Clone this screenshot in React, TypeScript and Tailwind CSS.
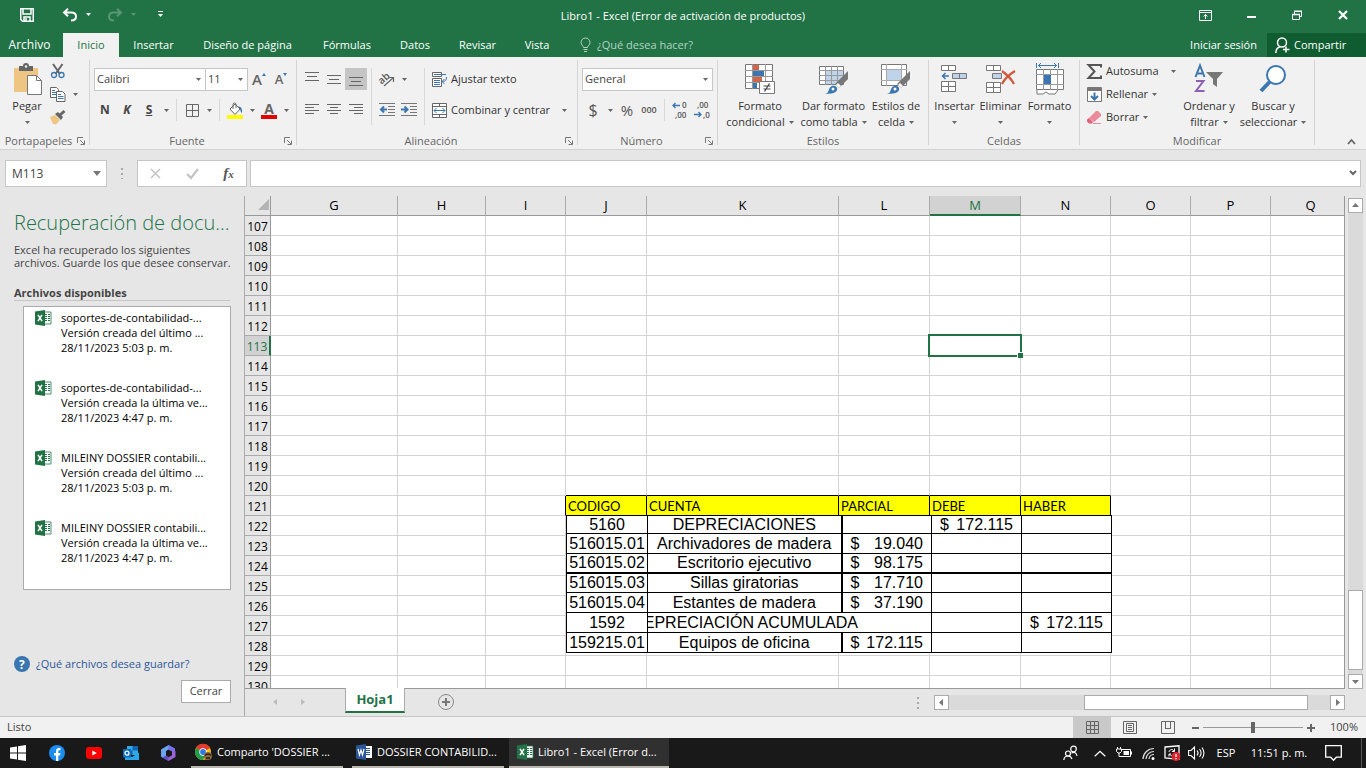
import type { ReactNode } from "react";
import clsx from "clsx";

const columns = [
  { name: "G", width: "w-[127px]" },
  { name: "H", width: "w-[88px]" },
  { name: "I", width: "w-20" },
  { name: "J", width: "w-[81px]" },
  { name: "K", width: "w-48" },
  { name: "L", width: "w-[91px]" },
  { name: "M", width: "w-[91px]" },
  { name: "N", width: "w-[90px]" },
  { name: "O", width: "w-20" },
  { name: "P", width: "w-20" },
  { name: "Q", width: "w-20" },
];

const rows = Array.from({ length: 24 }, (_, i) => 107 + i);

const headings: Record<string, string> = {
  J: "CODIGO",
  K: "CUENTA",
  L: "PARCIAL",
  M: "DEBE",
  N: "HABER",
};

const entries = [
  { code: "5160", account: "DEPRECIACIONES", debit: "172.115" },
  { code: "516015.01", account: "Archivadores de madera", partial: "19.040" },
  { code: "516015.02", account: "Escritorio ejecutivo", partial: "98.175" },
  { code: "516015.03", account: "Sillas giratorias", partial: "17.710", heavy: true },
  { code: "516015.04", account: "Estantes de madera", partial: "37.190" },
  { code: "1592", account: "DEPRECIACIÓN ACUMULADA", credit: "172.115", wide: true },
  { code: "159215.01", account: "Equipos de oficina", partial: "172.115" },
];

const recovered = [
  { name: "soportes-de-contabilidad-...", version: "Versión creada del último ...", date: "28/11/2023 5:03 p. m." },
  { name: "soportes-de-contabilidad-...", version: "Versión creada la última ve...", date: "28/11/2023 4:47 p. m." },
  { name: "MILEINY DOSSIER contabili...", version: "Versión creada del último ...", date: "28/11/2023 5:03 p. m." },
  { name: "MILEINY DOSSIER contabili...", version: "Versión creada la última ve...", date: "28/11/2023 4:47 p. m." },
];

function Svg({ w, h, children, className }: { w: number; h: number; children: ReactNode; className?: string }) {
  return (
    <svg width={w} height={h} viewBox={`0 0 ${w} ${h}`} fill="none" className={clsx("shrink-0 overflow-visible", className)} aria-hidden="true">
      {children}
    </svg>
  );
}

function Caret({ className = "text-[#666]" }: { className?: string }) {
  return (
    <Svg w={5} h={3} className={className}>
      <path d="M0 0h5L2.5 3z" fill="currentColor" />
    </Svg>
  );
}

function CaretButton({ label }: { label: string }) {
  return (
    <button aria-label={label} className="flex h-[22px] w-3 items-center justify-center">
      <Caret />
    </button>
  );
}

function Tool({ label, active, children }: { label: string; active?: boolean; children: ReactNode }) {
  return (
    <button aria-label={label} className={clsx("flex h-[22px] w-[22px] items-center justify-center", active && "bg-[#c5c5c5]")}>
      {children}
    </button>
  );
}

function Divider() {
  return <div className="mx-1 w-px self-stretch bg-[#d8d8d8]" />;
}

function Group({ title, launcher, className, children }: { title: string; launcher?: boolean; className?: string; children: ReactNode }) {
  return (
    <section className="flex pt-[3px]">
      <div className={clsx("flex flex-col", className)}>
        <div className="flex grow">{children}</div>
        <div className="flex h-4 items-center">
          <h2 className="grow text-center text-[11px] leading-4 text-[#666]">{title}</h2>
          {launcher && (
            <button aria-label={`Opciones de ${title}`} className="w-3">
              <Svg w={8} h={8}>
                <path d="M.5 6V.5H6M3 3l4 4M7.5 3.500v4h-4" stroke="#777" />
              </Svg>
            </button>
          )}
        </div>
      </div>
      <div className="mb-1 w-px bg-[#d4d4d4]" />
    </section>
  );
}

function BigButton({ icon, first, second, className }: { icon: ReactNode; first: string; second?: string; className: string }) {
  return (
    <button className={clsx("flex flex-col items-center text-[11px] leading-4 text-[#333]", className)}>
      <span className="flex h-[38px] items-center">{icon}</span>
      <span className="whitespace-nowrap">{first}</span>
      <span className="flex h-4 items-center gap-1 whitespace-nowrap">
        {second}
        <Caret />
      </span>
    </button>
  );
}

function Lines({ rows }: { rows: [number, number, number][] }) {
  return (
    <Svg w={14} h={14}>
      {rows.map(([x, y, w]) => (
        <path key={y} d={`M${x} ${y + 0.5}h${w}`} stroke="#666" />
      ))}
    </Svg>
  );
}

function Indent({ out }: { out?: boolean }) {
  return (
    <Svg w={16} h={14}>
      <path d="M0 .5h16M9 3.500h7M9 6.500h7M9 9.500h7M0 12.500h16" stroke="#777" />
      <path d={out ? "M8 6.500H2M5 3.500l-3 3 3 3" : "M0 6.500h6M3.500 3.500l3 3-3 3"} stroke="#3b76b0" strokeWidth="2" />
    </Svg>
  );
}

function SheetIcon() {
  return (
    <Svg w={16} h={16}>
      <path d="M9 2h7v12H9z" fill="#fff" stroke="#217346" strokeWidth=".8" />
      <path d="M10 4.500h2M13 4.500h2M10 6.500h2M13 6.500h2M10 8.500h2M13 8.500h2M10 10.500h2M13 10.500h2" stroke="#217346" />
      <path d="M0 1.500 10 0v16L0 14.500z" fill="#217346" />
      <path d="m3 4.800 4 6.400M7 4.800l-4 6.400" stroke="#fff" strokeWidth="1.500" />
    </Svg>
  );
}

function WordIcon() {
  return (
    <Svg w={16} h={16}>
      <path d="M9 2h7v12H9z" fill="#fff" />
      <path d="M10 4.500h4M10 6.500h4M10 8.500h4M10 10.500h4" stroke="#2b579a" />
      <path d="M0 1.500 10 0v16L0 14.500z" fill="#2b579a" />
      <path d="m2 5 1.500 6L5 6l1.500 5L8 5" stroke="#fff" strokeWidth="1.200" />
    </Svg>
  );
}

function TitleBar() {
  return (
    <div className="grid h-[33px] grid-cols-3 items-center text-white">
      <div className="flex items-center pb-1 pl-5">
        <button aria-label="Guardar">
          <Svg w={14} h={14}>
            <path d="M.75.75h12.500v12.500H2.500L.75 11.500z" stroke="#fff" strokeWidth="1.500" />
            <path d="M3 1v5h8V1M4 13V9h6v4M6 10v3" stroke="#fff" strokeWidth="1.500" />
          </Svg>
        </button>
        <button aria-label="Deshacer" className="ml-7">
          <Svg w={16} h={14}>
            <path d="M6 .8 2 4.500l4 3.700M2.500 4.500H9c3 0 5 1.500 5 4S12 12.500 9 12.500" stroke="#fff" strokeWidth="2" />
          </Svg>
        </button>
        <button aria-label="Opciones de deshacer" className="ml-2"><Caret className="text-white" /></button>
        <button aria-label="Rehacer" disabled className="ml-4 opacity-25">
          <Svg w={16} h={14}>
            <path d="m10 .8 4 3.700-4 3.700M13.500 4.500H7c-3 0-5 1.500-5 4s2 4 5 4" stroke="#fff" strokeWidth="2" />
          </Svg>
        </button>
        <button aria-label="Opciones de rehacer" disabled className="ml-2 opacity-25"><Caret className="text-white" /></button>
        <button aria-label="Personalizar barra" className="ml-[22px]">
          <Svg w={5} h={7}>
            <path d="M0 .5h5" stroke="#fff" />
            <path d="M0 3h5L2.500 6z" fill="#fff" />
          </Svg>
        </button>
      </div>
      <h1 className="text-center text-[11px] whitespace-nowrap">Libro1 - Excel (Error de activación de productos)</h1>
      <div className="flex items-center justify-end pb-[3px]">
        <button aria-label="Opciones de cinta" className="flex w-[46px] justify-center">
          <Svg w={13} h={11}>
            <path d="M.5.500h12v10H.5zM.5 2.500h12M6.500 9V4.500M4.500 6.500l2-2 2 2" stroke="#fff" />
          </Svg>
        </button>
        <button aria-label="Minimizar" className="flex w-[46px] justify-center">
          <Svg w={9} h={10}><path d="M0 7h9" stroke="#fff" strokeWidth="2" /></Svg>
        </button>
        <button aria-label="Restaurar" className="flex w-[46px] justify-center">
          <Svg w={10} h={10}>
            <path d="M.5 4.500h7v5h-7zM2.500 4V1.500h7v5H8M2 1h8" stroke="#fff" />
            <path d="M0 4.500h8" stroke="#fff" strokeWidth="1.500" />
          </Svg>
        </button>
        <button aria-label="Cerrar ventana" className="flex w-[46px] justify-center">
          <Svg w={10} h={10}><path d="m1 1 8 8M9 1 1 9" stroke="#fff" strokeWidth="2.200" /></Svg>
        </button>
      </div>
    </div>
  );
}

function Tabs() {
  const tab = "h-full whitespace-nowrap";
  return (
    <nav className="flex h-6 items-center text-[11px] text-white">
      <button className={clsx(tab, "w-[63px] pr-1 text-[12px]")}>Archivo</button>
      <button className={clsx(tab, "w-14 bg-[#f1f1f1] text-[#217346]")}>Inicio</button>
      <button className={clsx(tab, "w-[69px]")}>Insertar</button>
      <button className={clsx(tab, "w-[119px]")}>Diseño de página</button>
      <button className={clsx(tab, "w-20")}>Fórmulas</button>
      <button className={clsx(tab, "w-14")}>Datos</button>
      <button className={clsx(tab, "w-[69px]")}>Revisar</button>
      <button className={clsx(tab, "w-[50px]")}>Vista</button>
      <label className="ml-[18px] flex items-center gap-[6px] text-[#b5d2c1]">
        <Svg w={11} h={14}>
          <path d="M3.500 9.500C3.500 8 1 7 1 4.500a4.400 4.400 0 0 1 9 0c0 2.500-2.500 3.500-2.500 5zM3.500 11.500h4M4 13.500h3" stroke="currentColor" />
        </Svg>
        <input className="w-28 outline-none placeholder:text-[#b5d2c1]" placeholder="¿Qué desea hacer?" />
      </label>
      <div className="grow" />
      <button className={clsx(tab, "px-[10px]")}>Iniciar sesión</button>
      <button className={clsx(tab, "flex w-[99px] items-center gap-1 bg-[#0e5c2f] pl-2")}>
        <Svg w={15} h={16}>
          <circle cx="7" cy="5.500" r="4.500" stroke="#fff" strokeWidth="1.500" />
          <path d="M.8 16c0-3.500 1.500-5.500 4.200-6.300M11 9.500v6M8 12.500h6.500" stroke="#fff" strokeWidth="1.500" />
        </Svg>
        Compartir
      </button>
    </nav>
  );
}

function Clipboard() {
  return (
    <Group title="Portapapeles" launcher className="w-[89px]">
      <BigButton
        className="ml-[7px] w-10"
        first="Pegar"
        icon={
          <Svg w={29} h={32}>
            <path d="M1 5h24v24H1z" fill="#efc584" />
            <path d="M6 3h4a3 3 0 0 1 6 0h4v5H6z" fill="#666" />
            <circle cx="13" cy="3.500" r="1.200" fill="#f1f1f1" />
            <path d="M14.500 12.500h9l5 5v14h-14z" fill="#fff" stroke="#777" />
            <path d="M23.500 12.500v5h5" stroke="#777" />
          </Svg>
        }
      />
      <div className="flex flex-col gap-px">
        <Tool label="Cortar">
          <Svg w={16} h={16} >
            <path d="m3 1 7 10M12.500 1l-7 10" stroke="#666" strokeWidth="2" />
            <circle cx="4" cy="12" r="2.500" stroke="#3b76b0" strokeWidth="1.300" />
            <circle cx="11.500" cy="12" r="2.500" stroke="#3b76b0" strokeWidth="1.300" />
          </Svg>
        </Tool>
        <div className="flex">
          <Tool label="Copiar">
            <Svg w={16} h={15}>
              <path d="M.5.500h6l2 2v8h-8z" fill="#fff" stroke="#666" />
              <path d="M2 3.500h3M2 5.500h4M2 7.500h4" stroke="#3b76b0" />
              <path d="M6.500 4.500h6l2.500 2.500v7.500H6.500z" fill="#fff" stroke="#666" />
              <path d="M8 7.500h3M8 9.500h5.500M8 11.500h5.500" stroke="#3b76b0" />
            </Svg>
          </Tool>
          <CaretButton label="Opciones de copiar" />
        </div>
        <Tool label="Copiar formato">
          <Svg w={16} h={15}>
            <path d="m0 7 5-2 5 5-4 4.500-3-.5z" fill="#efc584" />
            <path d="m5 4 3-2 5 5-2 3z" fill="#666" />
            <path d="m10 5 4.500-4" stroke="#666" strokeWidth="3" />
          </Svg>
        </Tool>
      </div>
    </Group>
  );
}

function FontGroup() {
  return (
    <Group title="Fuente" launcher className="w-[206px]">
      <div className="flex flex-col gap-2 pt-2 pl-1">
        <div className="flex items-center">
          <Select label="Fuente" value="Calibri" className="w-[112px]" />
          <Select label="Tamaño" value="11" className="-ml-px w-[43px]" />
          <Tool label="Aumentar tamaño">
            <span className="text-[15px] font-semibold text-[#666]">A</span>
            <Svg w={4} h={14}><path d="M0 3h4L2 0z" fill="#3b76b0" /></Svg>
          </Tool>
          <Tool label="Disminuir tamaño">
            <span className="text-[13px] font-semibold text-[#666]">A</span>
            <Svg w={4} h={14}><path d="M0 0h4L2 3z" fill="#3b76b0" /></Svg>
          </Tool>
        </div>
        <div className="flex items-center text-[12px] font-bold text-[#444]">
          <Tool label="Negrita">N</Tool>
          <Tool label="Cursiva"><i>K</i></Tool>
          <Tool label="Subrayado"><u>S</u></Tool>
          <CaretButton label="Opciones de subrayado" />
          <Divider />
          <Tool label="Bordes">
            <Svg w={13} h={13}><path d="M.5.500h12v12H.5zM6.500 0v13M0 6.500h13" stroke="#666" /></Svg>
          </Tool>
          <CaretButton label="Opciones de bordes" />
          <Divider />
          <Tool label="Color de relleno">
            <Svg w={16} h={17}>
              <path d="m3 7 5-5 5 5-5 5.500z" fill="#fff" stroke="#666" />
              <path d="M6 7V2.500a1.500 1.500 0 0 1 3 0V6" stroke="#666" />
              <path d="M11 4.500c3 0 4.500 2 4 6.500-1.500-.5-1.500-3-2-4z" fill="#3b76b0" />
              <path d="M0 13h16v4H0z" fill="#ff0" />
            </Svg>
          </Tool>
          <CaretButton label="Opciones de relleno" />
          <Tool label="Color de fuente">
            <span className="flex flex-col items-center">
              <span className="text-[14px] leading-[13px] text-[#666]">A</span>
              <span className="h-1 w-4 bg-[#e60000]" />
            </span>
          </Tool>
          <CaretButton label="Opciones de color" />
        </div>
      </div>
    </Group>
  );
}

function Select({ label, value, className }: { label: string; value: string; className: string }) {
  return (
    <div className={clsx("relative flex items-center", className)}>
      <select aria-label={label} className="h-[23px] w-full appearance-none border border-[#c6c6c6] bg-white pl-[2px] text-[11px] text-[#444]">
        <option>{value}</option>
      </select>
      <Caret className="pointer-events-none absolute right-[5px] text-[#666]" />
    </div>
  );
}

function Alignment() {
  return (
    <Group title="Alineación" launcher className="w-[280px]">
      <div className="flex pt-2 pb-2 pl-1 text-[11px] text-[#333]">
        <div className="grid grid-cols-3 content-start gap-y-[9px]">
          <Tool label="Arriba"><Lines rows={[[0, 0, 14], [2, 4, 10], [0, 8, 14]]} /></Tool>
          <Tool label="Medio"><Lines rows={[[0, 3, 14], [2, 7, 10], [0, 11, 14]]} /></Tool>
          <Tool label="Abajo" active><Lines rows={[[0, 5, 14], [2, 9, 10], [0, 13, 14]]} /></Tool>
          <Tool label="Izquierda"><Lines rows={[[0, 1, 14], [0, 4, 9], [0, 7, 14], [0, 10, 9]]} /></Tool>
          <Tool label="Centro"><Lines rows={[[0, 1, 14], [3, 4, 8], [0, 7, 14], [3, 10, 8]]} /></Tool>
          <Tool label="Derecha"><Lines rows={[[0, 1, 14], [5, 4, 9], [0, 7, 14], [5, 10, 9]]} /></Tool>
        </div>
        <Divider />
        <div className="flex w-11 flex-col gap-[9px]">
          <div className="flex">
            <Tool label="Orientación">
              <Svg w={18} h={16}>
                <text x="1" y="11" fontSize="10" fontWeight="600" fill="#555" transform="rotate(-42 6 9)">ab</text>
                <path d="m6 15 9-8M11 6.500h4.500V11" stroke="#666" strokeWidth="1.200" />
              </Svg>
            </Tool>
            <CaretButton label="Opciones de orientación" />
          </div>
          <div className="flex">
            <Tool label="Disminuir sangría"><Indent out /></Tool>
            <Tool label="Aumentar sangría"><Indent /></Tool>
          </div>
        </div>
        <Divider />
        <div className="flex flex-col gap-[9px]">
          <button className="flex h-[22px] items-center gap-1 pl-[3px]">
            <Svg w={15} h={15}>
              <path d="M.5.500h9v4h-9zM.5 6.500h9v8h-9z" fill="#fff" stroke="#666" />
              <path d="M2 2.500h12M2 8.500h6M2 10.500h6M2 12.500h6M14.500 5c0 3-1 4.500-4.500 4.500M12.500 7 10 9.500l2.500 2.500" stroke="#3b76b0" />
            </Svg>
            Ajustar texto
          </button>
          <button className="flex h-[22px] items-center gap-1 pl-[3px] whitespace-nowrap">
            <Svg w={15} h={15}>
              <path d="M.5.500h14v14H.5zM0 3.500h15M0 11.500h15M7.500 0v3M7.500 12v3" fill="#fff" stroke="#666" />
              <path d="M2 7.500h11M4.500 5 2 7.500 4.500 10M10.500 5 13 7.500 10.500 10" stroke="#3b76b0" />
            </Svg>
            Combinar y centrar
            <span className="pl-2"><Caret /></span>
          </button>
        </div>
      </div>
    </Group>
  );
}

function NumberGroup() {
  return (
    <Group title="Número" launcher className="w-[139px]">
      <div className="flex flex-col gap-2 pt-2 pl-1">
        <Select label="Formato de número" value="General" className="w-[131px]" />
        <div className="flex items-center text-[#555]">
          <Tool label="Contabilidad"><span className="text-[16px]">$</span></Tool>
          <CaretButton label="Opciones de moneda" />
          <Tool label="Porcentaje"><span className="text-[15px]">%</span></Tool>
          <Tool label="Millares"><span className="text-[9px] font-semibold">000</span></Tool>
          <Divider />
          <Tool label="Aumentar decimales">
            <Svg w={16} h={18}>
              <text x="10" y="7" fontSize="8" fontWeight="600" fill="#555">0</text>
              <text x="3" y="17" fontSize="8" fontWeight="600" fill="#555">,00</text>
              <path d="M8 4.500H1M3.500 2 1 4.500 3.500 7" stroke="#3b76b0" strokeWidth="1.300" />
            </Svg>
          </Tool>
          <Tool label="Disminuir decimales">
            <Svg w={16} h={18}>
              <text x="3" y="7" fontSize="8" fontWeight="600" fill="#555">,00</text>
              <text x="9" y="17" fontSize="8" fontWeight="600" fill="#555">,0</text>
              <path d="M0 13.500h7M4.500 11 7 13.500 4.500 16" stroke="#3b76b0" strokeWidth="1.300" />
            </Svg>
          </Tool>
        </div>
      </div>
    </Group>
  );
}

function Brush() {
  return (
    <>
      <path d="M29 7v8l-9 9-4-4z" fill="#777" />
      <path d="m19 19 3 3-2 2-3-3z" fill="#fff" />
      <path d="M6 30c4-1 3-4 5-6.500 2-2.500 6-2 7 .5 1 3-2 6-12 6z" fill="#3b76b0" />
      <circle cx="14" cy="25" r="1.500" fill="#fff" />
    </>
  );
}

function Styles() {
  return (
    <Group title="Estilos" className="w-[210px]">
      <div className="flex pl-[5px]">
        <BigButton
          className="w-[74px]"
          first="Formato"
          second="condicional"
          icon={
            <Svg w={30} h={30}>
              <path d="M.5.500h27v24H.5z" fill="#fff" stroke="#777" />
              <path d="M7 1h7v5H7zM7 13h10v5H7z" fill="#d2664b" />
              <path d="M7 7h12v5H7zM7 19h5v5H7z" fill="#3b76b0" />
              <path d="M0 6.500h28M0 12.500h28M0 18.500h28M7.500 0v25M20.500 0v25" stroke="#999" />
              <path d="M14.500 17.500h15v12h-15z" fill="#fff" stroke="#777" />
              <path d="M18.500 22h7M18.500 25h7M24.500 19.500l-5 8" stroke="#444" strokeWidth="1.200" />
            </Svg>
          }
        />
        <BigButton
          className="w-[73px]"
          first="Dar formato"
          second="como tabla"
          icon={
            <Svg w={30} h={30}>
              <path d="M.5 2.500h24v18H.5z" fill="#fff" stroke="#777" />
              <path d="M7 7h17v13H7z" fill="#bfd3ea" />
              <path d="M0 6.500h25M0 11.500h25M0 16.500h25M6.500 2v19M12.500 2v19M18.500 2v19" stroke="#999" />
              <Brush />
            </Svg>
          }
        />
        <BigButton
          className="w-[52px]"
          first="Estilos de"
          second="celda"
          icon={
            <Svg w={30} h={30}>
              <path d="M.5.500h25v21H.5z" fill="#fff" stroke="#777" />
              <path d="M6 6h14v10H6z" fill="#bfd3ea" />
              <path d="M0 5.500h26M0 16.500h26M5.500 0v22M20.500 0v22" stroke="#aaa" />
              <Brush />
            </Svg>
          }
        />
      </div>
    </Group>
  );
}

function Cells() {
  return (
    <Group title="Celdas" className="w-[150px]">
      <div className="flex pl-[3px]">
        <BigButton
          className="w-[45px]"
          first="Insertar"
          icon={
            <Svg w={27} h={29}>
              <path d="M.5.500h14v5H.5zM7.500 0v6M.5 16.500h14v10H.5zM7.500 16v11M0 21.500h15" fill="#fff" stroke="#777" />
              <path d="M11.500 8.500h14v5h-14zM18.500 8v6" fill="#bfd3ea" stroke="#777" />
              <path d="M8 11H1.500M4.500 8l-3 3 3 3" stroke="#3b76b0" strokeWidth="1.500" />
            </Svg>
          }
        />
        <BigButton
          className="w-[47px]"
          first="Eliminar"
          icon={
            <Svg w={30} h={29}>
              <path d="M.5.500h14v5H.5zM7.500 0v6M.5 17.500h14v10H.5zM7.500 17v11M0 22.500h15" fill="#fff" stroke="#777" />
              <path d="M6.500 8.500h9v5h-9z" fill="#bfd3ea" stroke="#777" />
              <path d="M16 6c4 3 9 7 12 13M29 6c-5 3-10 7-13 13" stroke="#d2573b" strokeWidth="2.200" />
            </Svg>
          }
        />
        <BigButton
          className="w-[51px]"
          first="Formato"
          icon={
            <Svg w={28} h={32}>
              <path d="M.5 0v5M22.500 0v5M2 2.500h19M5 0 2.500 2.500 5 5M18 0l2.500 2.500L18 5" stroke="#3b76b0" />
              <path d="M.5 6.500h27v20H.5zM1 27v4h6l3-2 3 2h6l3-4" fill="#fff" stroke="#777" />
              <path d="M0 11.500h28M0 21.500h28M7.500 6v21M14.500 6v21M21.500 6v21" stroke="#999" />
              <path d="M8 12h7v9H8z" fill="#3b76b0" />
            </Svg>
          }
        />
      </div>
    </Group>
  );
}

function Editing() {
  const action = "flex h-[23px] items-center gap-1 text-[11px] text-[#333]";
  return (
    <Group title="Modificar" className="w-[234px]">
      <div className="flex w-24 flex-col pl-[7px]">
        <button className={action}>
          <Svg w={15} h={15}>
            <path d="M14 3.500V1H1.500l6 6.500-6 6.500H14v-2.500" stroke="#555" strokeWidth="2" />
          </Svg>
          <span className="grow text-left">Autosuma</span>
          <Caret />
        </button>
        <button className={action}>
          <Svg w={15} h={15}>
            <path d="M.5.500h14v14H.5z" fill="#fff" stroke="#777" />
            <path d="M1 1h13v3H1z" fill="#777" />
            <path d="M7.500 5.500v7M4 9l3.500 3.500L11 9" stroke="#3b76b0" strokeWidth="2" />
          </Svg>
          Rellenar <Caret />
        </button>
        <button className={action}>
          <Svg w={15} h={15}>
            <path d="m2 8 7-7h2l3 3v2l-7 6z" fill="#ea8a9b" />
            <path d="m0 9.500 2-1.500 4 4-1 1.500H2l-2-2z" fill="#e2607a" />
            <path d="M6 13.500h8" stroke="#ea8a9b" />
          </Svg>
          Borrar <Caret />
        </button>
      </div>
      <BigButton
        className="w-[66px]"
        first="Ordenar y"
        second="filtrar"
        icon={
          <Svg w={30} h={30}>
            <path d="M1.500 13 6 1.500 10.500 13M3 9.500h6" stroke="#3b76b0" strokeWidth="2" />
            <path d="M2 17h7.500L2 27h8.500" stroke="#8b5fb5" strokeWidth="2" />
            <path d="M12 8h17l-6 7v8l-4-3v-5z" fill="#777" />
          </Svg>
        }
      />
      <BigButton
        className="w-[62px]"
        first="Buscar y"
        second="seleccionar"
        icon={
          <Svg w={28} h={29}>
            <circle cx="17" cy="10" r="9" fill="#fff" stroke="#3b76b0" strokeWidth="2" />
            <path d="M10.500 17 2 26" stroke="#3b76b0" strokeWidth="4" />
          </Svg>
        }
      />
    </Group>
  );
}

function FormulaBar() {
  return (
    <div className="flex h-[46px] bg-[#e6e6e6] px-[5px] pt-[10px] pb-[9px]">
      <div className="relative flex w-[102px] items-center">
        <input aria-label="Cuadro de nombres" defaultValue="M113" className="h-full w-full border border-[#c6c6c6] bg-white pl-[6px] text-[12px] text-[#444]" />
        <Svg w={8} h={5} className="pointer-events-none absolute right-[6px]"><path d="M0 0h8L4 5z" fill="#777" /></Svg>
      </div>
      <div className="flex w-[30px] items-center justify-center">
        <Svg w={2} h={12}><path d="M1 1v11" stroke="#aaa" strokeWidth="2" strokeDasharray="2 3" /></Svg>
      </div>
      <div className="flex w-[110px] items-center justify-around border border-[#c6c6c6] bg-white">
        <button aria-label="Cancelar"><Svg w={11} h={11}><path d="m1 1 9 9M10 1l-9 9" stroke="#c4c4c4" strokeWidth="1.500" /></Svg></button>
        <button aria-label="Introducir"><Svg w={13} h={11}><path d="m1 6 4 4 7-9" stroke="#c4c4c4" strokeWidth="2.200" /></Svg></button>
        <button className="font-['Liberation_Serif',serif] text-[15px] leading-none font-bold text-[#555] italic">
          f<span className="text-[11px]">x</span>
        </button>
      </div>
      <div className="relative ml-[3px] flex grow items-center">
        <input aria-label="Barra de fórmulas" className="h-full w-full border border-[#c6c6c6] bg-white px-1 text-[12px]" />
        <button aria-label="Expandir" className="absolute right-1">
          <Svg w={8} h={6}><path d="m1 1 3 3 3-3" stroke="#666" strokeWidth="2" /></Svg>
        </button>
      </div>
    </div>
  );
}

function RecoveryPane() {
  return (
    <aside className="flex w-[244px] shrink-0 flex-col px-[14px] pt-3 text-[11px] text-[#444]">
      <h2 className="text-[20px] leading-[30px] font-light whitespace-nowrap text-[#217346]">Recuperación de docu...</h2>
      <p className="mt-[5px] leading-[13px] whitespace-nowrap">
        Excel ha recuperado los siguientes
        <br />
        archivos. Guarde los que desee conservar.
      </p>
      <h3 className="mt-4 mb-[5px] border-b border-[#c6c6c6] leading-[15px] font-bold">Archivos disponibles</h3>
      <ul className="ml-[9px] h-[284px] w-52 border border-[#ababab] bg-white pt-[3px] text-black">
        {recovered.map((file, i) => (
          <li key={i} className="flex h-[70px] gap-[10px] pl-[11px] leading-[15px] whitespace-nowrap">
            <SheetIcon />
            <div>
              <div>{file.name}</div>
              <div>{file.version}</div>
              <div>{file.date}</div>
            </div>
          </li>
        ))}
      </ul>
      <div className="grow" />
      <a href="#ayuda" className="flex items-center gap-[6px] text-[#2b579a]">
        <Svg w={16} h={16}>
          <circle cx="8" cy="8" r="8" fill="#3b76b0" />
          <text x="5" y="12.500" fontSize="12" fontWeight="700" fill="#fff">?</text>
        </Svg>
        ¿Qué archivos desea guardar?
      </a>
      <button className="mt-2 mr-[-1px] mb-[13px] h-[23px] w-[50px] self-end border border-[#ababab] bg-white">Cerrar</button>
    </aside>
  );
}

function Money({ value }: { value?: string }) {
  if (!value) return null;
  return (
    <div className="flex justify-between pr-2 pl-2">
      <span>$</span>
      <span>{value}</span>
    </div>
  );
}

// Sits on top of the cells and does not follow their grid exactly
function PastedTable() {
  return (
    <table className="absolute -top-px left-0 z-10 w-[546px] table-fixed border-collapse bg-white font-['Liberation_Sans',Arial,sans-serif] text-[16px] leading-[17px] text-black">
      <colgroup>
        <col className="w-[81px]" />
        <col className="w-[194px]" />
        <col className="w-[90px]" />
        <col className="w-[90px]" />
        <col className="w-[90px]" />
      </colgroup>
      <tbody>
        {entries.map((entry, i) => {
          const cell = clsx("border border-black p-0", entry.heavy && "border-t-2");
          return (
            <tr key={entry.code} className={i === 0 ? "h-[18px]" : i === 3 ? "h-[19px]" : "h-5"}>
              <td className={clsx(cell, "text-center")}>{entry.code}</td>
              <td className={clsx(cell, "text-center whitespace-nowrap")} colSpan={entry.wide ? 2 : 1}>
                {entry.wide ? (
                  <div className="flex w-[210px] justify-end overflow-x-clip">{entry.account}</div>
                ) : (
                  entry.account
                )}
              </td>
              {!entry.wide && (
                <td className={clsx(cell, "border-l-2")}>
                  <Money value={entry.partial} />
                </td>
              )}
              <td className={cell}><Money value={entry.debit} /></td>
              <td className={cell}><Money value={entry.credit} /></td>
            </tr>
          );
        })}
      </tbody>
    </table>
  );
}

function Grid() {
  return (
    <div className="min-w-0 grow overflow-hidden border-r border-b border-[#999]">
      <table className="w-[1105px] table-fixed border-separate border-spacing-0 bg-white text-black">
        <thead>
          <tr className="h-5 bg-[#e6e6e6] text-[13px]">
            <th className="w-[26px] border-r border-b border-[#999] p-0">
              <Svg w={12} h={12} className="ml-auto"><path d="M11 0v11H0z" fill="#b4b4b4" /></Svg>
            </th>
            {columns.map(({ name, width }) => (
              <th
                key={name}
                className={clsx(
                  width,
                  "border-r p-0 leading-[18px] font-normal",
                  name === "M"
                    ? "border-b-2 border-r-[#ababab] border-b-[#217346] bg-[#d2d2d2] text-[#217346]"
                    : "border-b border-r-[#ababab] border-b-[#999]",
                )}
              >
                {name}
              </th>
            ))}
          </tr>
        </thead>
        <tbody>
          {rows.map((row) => (
            <tr key={row} className="h-5">
              <th
                className={clsx(
                  "border-b border-b-[#ababab] p-0 pt-[2px] text-[12px] leading-[17px] font-normal",
                  row === 113
                    ? "border-r-2 border-r-[#217346] bg-[#d2d2d2] text-[#217346]"
                    : "border-r border-r-[#999] bg-[#e6e6e6]",
                )}
              >
                {row}
              </th>
              {columns.map(({ name }) => {
                const heading = row === 121 ? headings[name] : undefined;
                // the header band is outlined, so its neighbours lend it their edges
                const edge = row === 121 && name === "I" ? "border-r-black" : "border-r-[#d4d4d4]";
                const top = row === 120 && headings[name] ? "border-b-black" : "border-b-[#d4d4d4]";
                const selected = row === 113 && name === "M";
                const anchor = row === 122 && name === "J";
                return (
                  <td
                    key={name}
                    className={clsx(
                      "border-r border-b p-0",
                      (selected || anchor) && "relative",
                      heading
                        ? "border-black bg-[#ff0] pt-[2px] pl-[2px] font-['Lato',sans-serif] text-[13px] leading-[17px]"
                        : [edge, top],
                    )}
                  >
                    {heading}
                    {selected && (
                      <div className="absolute -inset-[2px] z-10 border-2 border-[#217346]">
                        <div className="absolute -right-[3px] -bottom-[3px] h-[6px] w-[6px] border-t border-l border-white bg-[#217346]" />
                      </div>
                    )}
                    {anchor && <PastedTable />}
                  </td>
                );
              })}
            </tr>
          ))}
        </tbody>
      </table>
    </div>
  );
}

function ScrollButton({ label, d }: { label: string; d: string }) {
  return (
    <button aria-label={label} className="flex h-[15px] w-[15px] shrink-0 items-center justify-center border border-[#ababab] bg-white">
      <Svg w={7} h={7}><path d={d} fill="#777" /></Svg>
    </button>
  );
}

function SheetTabs() {
  return (
    <div className="flex h-[27px] shrink-0 items-start pr-[21px]">
      <div className="flex h-full w-[100px] items-center justify-center gap-6 pr-3 pb-px">
        <button aria-label="Hoja anterior"><Svg w={4} h={6}><path d="M4 0v6L0 3z" fill="#bbb" /></Svg></button>
        <button aria-label="Hoja siguiente"><Svg w={4} h={6}><path d="M0 0v6l4-3z" fill="#bbb" /></Svg></button>
      </div>
      <button className="-mt-px h-[25px] w-[60px] border-x border-b-2 border-x-[#ababab] border-b-[#217346] bg-white text-[13px] font-bold text-[#217346]">Hoja1</button>
      <button aria-label="Hoja nueva" className="mt-[5px] ml-[33px]">
        <Svg w={16} h={16}>
          <circle cx="8" cy="8" r="7.500" stroke="#888" />
          <path d="M8 4v8M4 8h8" stroke="#777" strokeWidth="2" />
        </Svg>
      </button>
      <div className="grow" />
      <Svg w={2} h={12} className="mt-2 mr-[15px]"><path d="M1 0v12" stroke="#aaa" strokeWidth="2" strokeDasharray="2 3" /></Svg>
      <div className="mt-[6px] flex w-[411px] bg-[#dadada]">
        <ScrollButton label="Desplazar a la izquierda" d="M5 0v7L1 3.500z" />
        <div className="grow" />
        <div className="w-56 border border-[#ababab] bg-white" />
        <div className="w-[22px]" />
        <ScrollButton label="Desplazar a la derecha" d="M2 0v7l4-3.500z" />
      </div>
    </div>
  );
}

function StatusBar() {
  return (
    <div className="flex h-[22px] shrink-0 items-center border-t border-[#c6c6c6] bg-[#f1f1f1] pr-2 pl-[7px] text-[11px] text-[#444]">
      <span className="grow">Listo</span>
      <button aria-label="Normal" className="flex h-full w-[38px] items-center justify-center bg-[#c9c9c9]">
        <Svg w={13} h={13}><path d="M.5.500h12v12H.5zM4.500 0v13M8.500 0v13M0 4.500h13M0 8.500h13" stroke="#666" /></Svg>
      </button>
      <button aria-label="Diseño de página" className="flex h-full w-[38px] items-center justify-center">
        <Svg w={14} h={13}><path d="M.5.500h13v12H.5zM3.500 2.500h7v8h-7zM5 4.500h4M5 6.500h4M5 8.500h4" stroke="#666" /></Svg>
      </button>
      <button aria-label="Vista previa de salto de página" className="flex h-full w-[38px] items-center justify-center">
        <Svg w={14} h={13}><path d="M.5.500h13v12H.5zM4.500 0v7.500h5V0M9.500 7.500H4" stroke="#666" /></Svg>
      </button>
      <button aria-label="Alejar" className="ml-[5px]"><Svg w={7} h={8}><path d="M0 4h7" stroke="#666" strokeWidth="2" /></Svg></button>
      <input
        type="range"
        aria-label="Zoom"
        defaultValue={50}
        className="mx-1 h-3 w-[100px] appearance-none bg-[linear-gradient(#999,#999)] bg-[length:100%_1px] bg-center bg-no-repeat [&::-webkit-slider-thumb]:h-[11px] [&::-webkit-slider-thumb]:w-1 [&::-webkit-slider-thumb]:appearance-none [&::-webkit-slider-thumb]:bg-[#666]"
      />
      <button aria-label="Acercar"><Svg w={8} h={8}><path d="M0 4h8M4 0v8" stroke="#666" strokeWidth="2" /></Svg></button>
      <span className="w-[43px] text-right">100%</span>
    </div>
  );
}

function Taskbar() {
  const app = "flex h-full items-center gap-[5px] pl-1 border-b-2 border-[#b8b8b0] whitespace-nowrap overflow-hidden";
  return (
    <div className="flex h-[30px] shrink-0 items-center bg-[#191919] text-[11px] text-white">
      <button aria-label="Inicio" className="flex w-9 justify-center">
        <Svg w={16} h={16}><path d="M0 2.500 7 1.500V7.500H0zM8 1.300 16 0v7.500H8zM0 8.500h7v6L0 13.500zM8 8.500h8V16l-8-1.300z" fill="#fff" /></Svg>
      </button>
      <button aria-label="Facebook" className="flex w-10 justify-center pl-[2px]">
        <Svg w={16} h={16}>
          <circle cx="8" cy="8" r="8" fill="#1b8df0" />
          <path d="M7 16v-5.500H5V8h2V6.300C7 4 8.300 3 10 3h1.500v2.200h-1C9.500 5.200 9.300 5.700 9.300 6.500V8h2.200l-.4 2.500H9.300V16z" fill="#fff" />
        </Svg>
      </button>
      <button aria-label="YouTube" className="flex w-9 justify-center">
        <Svg w={16} h={12}>
          <rect width="16" height="12" rx="3" fill="#f00" />
          <path d="m6.300 3.500 4.500 2.500-4.500 2.500z" fill="#fff" />
        </Svg>
      </button>
      <button aria-label="Outlook" className="flex w-[38px] justify-center">
        <Svg w={16} h={16}>
          <path d="M4 1h11v9H4z" fill="#1066b5" />
          <path d="M4 1h5.500v4.500H4zM9.500 5.500H15V10H9.500z" fill="#32a9e7" />
          <path d="M2 7.500 9 12l7-4.500V15H2z" fill="#28a8ea" />
          <path d="M0 4h8v8.500H0z" fill="#0f6cbd" />
          <circle cx="4" cy="8.200" r="2" stroke="#fff" strokeWidth="1.200" />
        </Svg>
      </button>
      <button aria-label="Microsoft 365" className="flex w-9 justify-center">
        <Svg w={15} h={16}>
          <path d="m7.500 0 6.500 3.800v4L7.500 4.500 5 6v5l-3.500 1.700L0 11.500v-7z" fill="#6aa5ee" />
          <path d="m7.500 0 6.500 3.800v4L7.500 4.500z" fill="#7a6ff0" />
          <path d="M14.500 6v6L7.500 16l-6-3.500L5 10.800l2.500 1.400 3.500-2V6z" fill="#9a62d8" />
          <path d="m1.500 12.500 3.500-1.700 2.500 1.400V16z" fill="#5a50c8" />
        </Svg>
      </button>
      <button className={clsx(app, "ml-[5px] w-[152px]")}>
        <Svg w={17} h={16}>
          <circle cx="8" cy="8" r="8" fill="#fbc116" />
          <path d="M8 8 1 4a8 8 0 0 1 14 0z" fill="#e33b2e" />
          <path d="M8 8 1.100 4A8 8 0 0 0 8 16l3.500-6z" fill="#229c4b" />
          <circle cx="8" cy="8" r="3.700" fill="#fff" />
          <circle cx="8" cy="8" r="2.900" fill="#2f78e4" />
          <circle cx="13" cy="12" r="4" fill="#8b6b43" />
          <path d="M10 11.500c2-2 4-2 6 0M11 14h4" stroke="#2b1d12" strokeWidth="1.300" />
        </Svg>
        Comparto 'DOSSIER ...
      </button>
      <button className={clsx(app, "ml-[9px] w-[152px]")}>
        <WordIcon />
        DOSSIER CONTABILID...
      </button>
      <button className={clsx(app, "ml-[5px] w-40 bg-[#303030] pl-2")}>
        <SheetIcon />
        Libro1 - Excel (Error d...
      </button>
      <div className="grow" />
      <button aria-label="Contactos" className="flex w-9 justify-center">
        <Svg w={15} h={16}>
          <circle cx="10.500" cy="4" r="2.800" stroke="#fff" strokeWidth="1.200" />
          <circle cx="5" cy="8.500" r="2.500" stroke="#fff" strokeWidth="1.200" />
          <path d="M.8 15c.3-2.500 2-4 4.200-4s3.500 1.500 4 3M8.500 8c3-1.500 5 0 5.500 3" stroke="#fff" strokeWidth="1.200" />
        </Svg>
      </button>
      <button aria-label="Iconos ocultos" className="flex w-6 justify-center">
        <Svg w={12} h={7}><path d="m.7 6.300 5.300-5 5.300 5" stroke="#fff" strokeWidth="1.300" /></Svg>
      </button>
      <button aria-label="Batería" className="flex w-6 justify-center">
        <Svg w={16} h={12}>
          <path d="M6 2.500h8.500v7H4M15.500 4.500v3M1.500 0v2M4.500 0v2M3 6v3.500h2" stroke="#fff" />
          <path d="M.5 2h5v2.500L4 6H2L.5 4.500z" stroke="#fff" />
          <path d="M7.500 4H13v4H7.500z" fill="#fff" />
        </Svg>
      </button>
      <button aria-label="Wi-Fi" className="flex w-[25px] justify-center">
        <Svg w={13} h={13}>
          <path d="M1 12A11 11 0 0 1 12 1.500M4 12a8 8 0 0 1 8-7.500M7 12a5 5 0 0 1 5-4.500" stroke="#ddd" strokeWidth="1.200" />
          <circle cx="11" cy="11.500" r="1.500" fill="#fff" />
        </Svg>
      </button>
      <button aria-label="Actualización" className="flex w-[23px] justify-center">
        <Svg w={17} h={16}>
          <path d="m1 2 14-1.200v13.500L1 13z" stroke="#fff" strokeWidth="1.300" />
          <path d="M5 7c.5-3 4-3 5-1M10.500 3.500V6.500H8M10 8.500c-.5 2.500-3.500 2.500-5 .5M5 11.500V9h2" stroke="#fff" />
          <circle cx="12" cy="11.500" r="4.500" fill="#e0242f" />
          <path d="M12 9v3M12 13v1.300" stroke="#fff" strokeWidth="1.300" />
        </Svg>
      </button>
      <button aria-label="Volumen" className="flex w-[25px] justify-center">
        <Svg w={17} h={14}>
          <path d="M.6 4.500H3L6.500 1v12L3 9.500H.6zM9 4.500c1.300 1.500 1.300 3.500 0 5M11.500 3c2 2.500 2 5.500 0 8M14 1.500c2.500 3.500 2.500 7.500 0 11" stroke="#fff" strokeWidth="1.100" />
        </Svg>
      </button>
      <span className="w-[34px] text-center">ESP</span>
      <span className="w-[72px] text-center whitespace-nowrap">11:51 p. m.</span>
      <button aria-label="Notificaciones" className="mr-[10px] flex w-9 justify-center">
        <Svg w={17} h={16}><path d="M.7.700h15.600v11.500h-5l-2.800 3-2.800-3h-5z" stroke="#fff" strokeWidth="1.300" /></Svg>
      </button>
      <div className="mr-1 h-full w-px bg-[#555]" />
    </div>
  );
}

export default function App() {
  return (
    <div className="flex h-screen flex-col overflow-hidden bg-[#e6e6e6] font-['Open_Sans','Noto_Sans',sans-serif]">
      <header className="shrink-0 bg-[#217346]">
        <TitleBar />
        <Tabs />
      </header>

      <div className="flex h-[93px] shrink-0 border-b border-[#d2d2d2] bg-[#f1f1f1]">
        <Clipboard />
        <FontGroup />
        <Alignment />
        <NumberGroup />
        <Styles />
        <Cells />
        <Editing />
        <button aria-label="Contraer la cinta" className="mr-[10px] mb-1 ml-auto self-end">
          <Svg w={9} h={7}><path d="m1 6 3.500-4L8 6" stroke="#666" strokeWidth="1.800" /></Svg>
        </button>
      </div>

      <FormulaBar />

      <div className="flex min-h-0 grow">
        <RecoveryPane />
        <main className="flex min-w-0 grow flex-col border-l border-[#ababab]">
          <div className="flex min-h-0 grow">
            <Grid />
            <div className="mx-[3px] mt-[2px] flex w-[15px] shrink-0 flex-col bg-[#dadada]">
              <ScrollButton label="Desplazar arriba" d="M0 5h7L3.500 1z" />
              <div className="grow" />
              <div className="h-20 border border-[#ababab] bg-white" />
              <div className="h-1" />
              <ScrollButton label="Desplazar abajo" d="M0 2h7L3.500 6z" />
            </div>
          </div>
          <SheetTabs />
        </main>
      </div>

      <StatusBar />
      <Taskbar />
    </div>
  );
}
